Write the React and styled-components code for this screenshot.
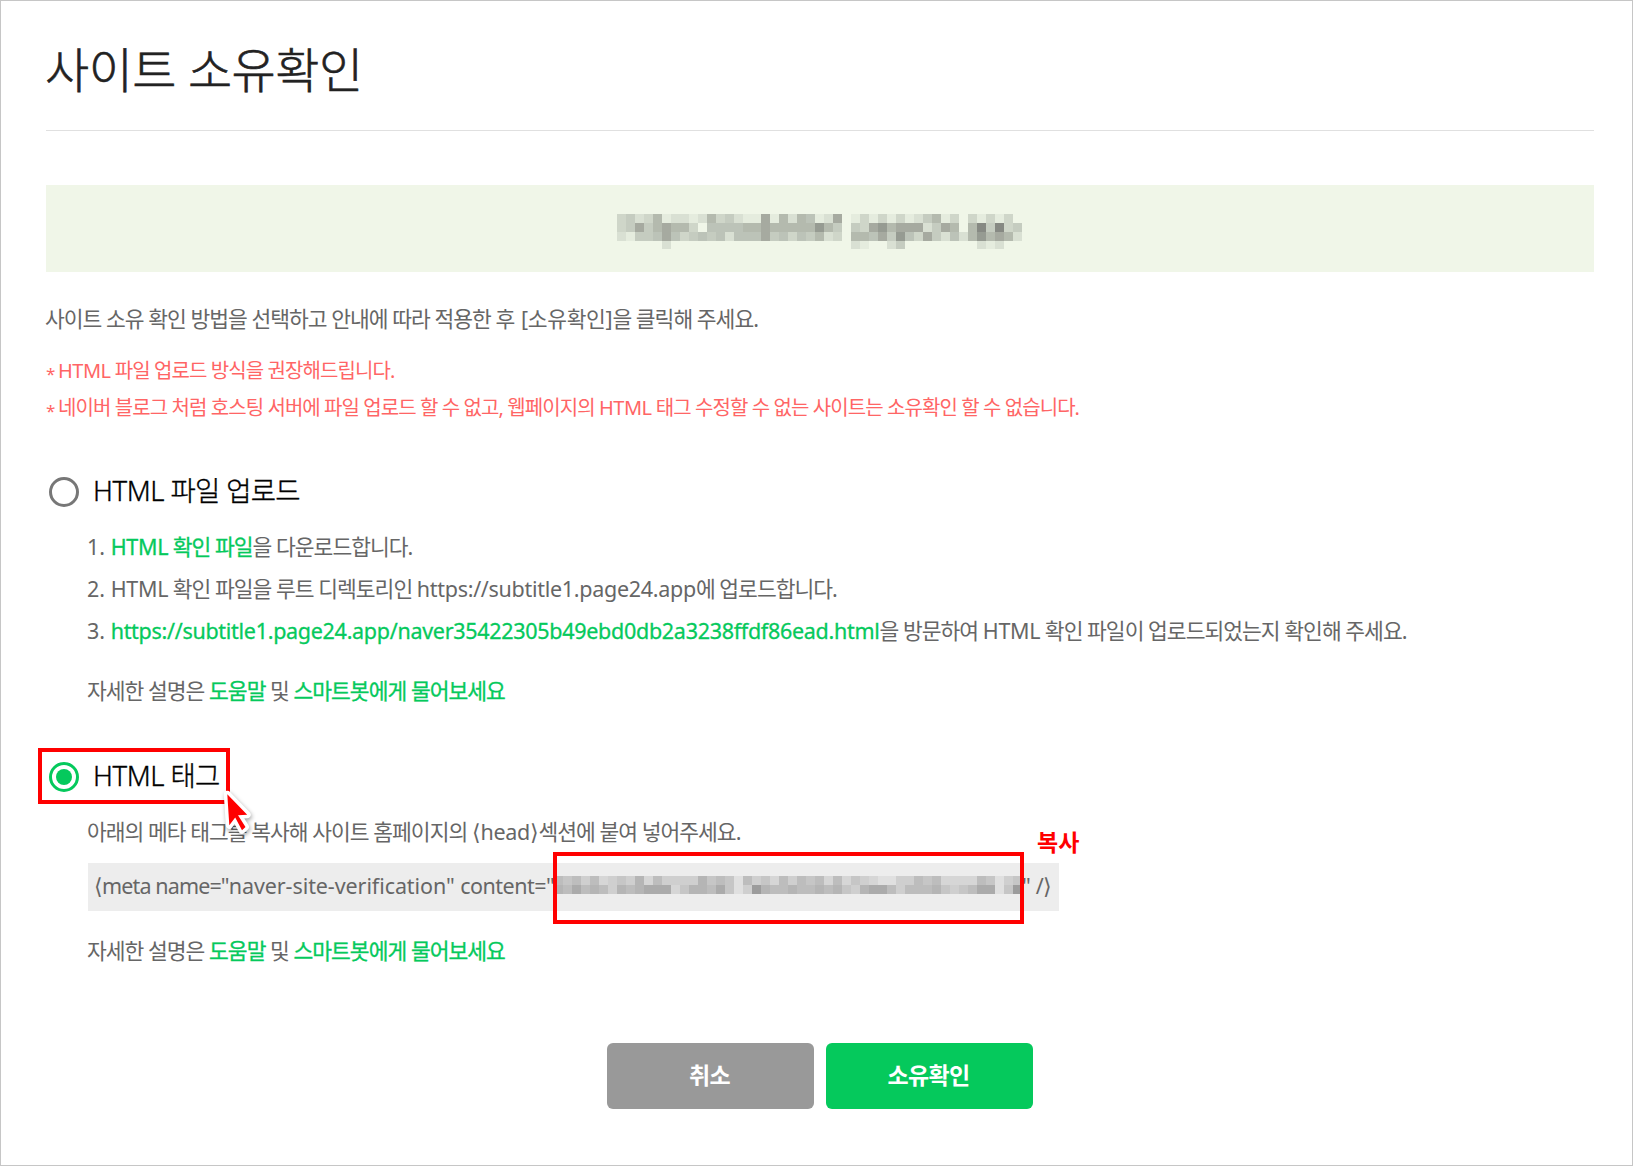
import React, { useState } from 'react'
import styled, { createGlobalStyle } from 'styled-components';


// one digit per 9px cell, 0 is empty
const urlMosaic = {
  colors: ["none", "#e5ecde", "#d9e0d3", "#cfd6c9", "#c5ccc0", "#bcc3b8", "#b4baae", "#a6aaa0", "#969b92", "#868983"],
  rows: [
    "342361221263421171626512701313131246130313130",
    "347467663055556676666686404378677724760694934",
    "214457534545255574535462306657485374252686762",
    "000002000000000000000000002100240000000021200",
  ],
};

const codeMosaic = {
  colors: ["none", "#e0e0e0", "#d6d6d6", "#cfcfcf", "#c6c6c6", "#bdbdbd", "#b5b5b5", "#ababab", "#9c9c9c"],
  rows: [
    "5453523436253333645415342535452524321133545222254134",
    "6575653656777246657413865565565643677535556434577148",
  ],
};

// offset cuts the left side of the first column
const Mosaic = ({ data, width, height, offset = 0 }) => (
  <MosaicSvg width={width} height={height} shapeRendering="crispEdges">
    {data.rows.map((row, y) =>
      row.split("").map((n, x) => (
        <rect key={x + "-" + y} x={x * 9 - offset} y={y * 9} width="9" height="9" fill={data.colors[n]} />
      ))
    )}
  </MosaicSvg>
);

const Help = () => (
  <HelpText>
    자세한 설명은 <Link href="#">도움말</Link> 및 <Link href="#">스마트봇에게 물어보세요</Link>
  </HelpText>
);

const App = () => {
  const [method, setMethod] = useState("tag");

  return (
    <Page>
      <GlobalStyle />
      <Header>
        <Title>사이트 소유확인</Title>
      </Header>
      <Banner>
        <Mosaic data={urlMosaic} width={405} height={35} />
      </Banner>
      <Guide>
        사이트 소유 확인 방법을 선택하고 안내에 따라 적용한 후 <Bracket>[소유확인]</Bracket>을 클릭해 주세요.
      </Guide>
      <Notice>
        <li><Star>* </Star><Latin $ls="-0.5px">HTML</Latin> 파일 업로드 방식을 권장해드립니다.</li>
        <li>
          <Star>* </Star>네이버 블로그 처럼 호스팅 서버에 파일 업로드 할 수 없고, 웹페이지의 <Latin $ls="-0.5px">HTML</Latin> 태그 수정할 수 없는 사이트는 소유확인 할 수 없습니다.
        </li>
      </Notice>

      <Method $top="46px" onClick={() => setMethod("file")}>
        <Radio $checked={method === "file"} />
        <MethodName><Latin $ls="-0.4px">HTML</Latin> 파일 업로드</MethodName>
      </Method>
      <Section $top="14px">
        <Step><Latin $ls="0">1. </Latin><Link href="#"><Latin>HTML</Latin> 확인 파일</Link>을 다운로드합니다.</Step>
        <Step>
          <Latin $ls="0">2. </Latin><Latin>HTML</Latin> 확인 파일을 루트 디렉토리인 <Latin>https://subtitle1.page24.app</Latin>에 업로드합니다.
        </Step>
        <Step>
          <Latin $ls="0">3. </Latin><Link href="#"><Latin>https://subtitle1.page24.app/naver35422305b49ebd0db2a3238ffdf86ead.html</Latin></Link>을 방문하여 <Latin>HTML</Latin> 확인 파일이 업로드되었는지 확인해 주세요.
        </Step>
        <Help />
      </Section>

      <Method $top="51px" onClick={() => setMethod("tag")}>
        <Radio $checked={method === "tag"} />
        <MethodName><Latin $ls="-0.4px">HTML</Latin> 태그</MethodName>
        <MethodMark />
        <Cursor viewBox="0 0 44 56">
          <path d="M9.3 9.3 29.2 29.7 20 30.2 27.5 42 24 45.3 17.2 32.5 11.3 40.3Z" />
        </Cursor>
      </Method>
      <Section $top="20px">
        <Desc>아래의 메타 태그를 복사해 사이트 홈페이지의 <Latin $ls="-0.36px">⟨head⟩</Latin>섹션에 붙여 넣어주세요.</Desc>
        <Code>
          <CodeText>
            <Latin $ls="-0.88px">⟨meta name="</Latin>
            <Latin $ls="-0.08px">naver-site-verification" </Latin>
            <Latin $ls="-0.5px">content="</Latin>
          </CodeText>
          <Mosaic data={codeMosaic} width={463} height={18} offset={3} />
          <CodeText>" /⟩</CodeText>
          <CodeMark />
          <CopyLabel>복사</CopyLabel>
        </Code>
        <Help />
      </Section>

      <Buttons>
        <Button $bg="#999">취소</Button>
        <Button $bg="#05c95c">소유확인</Button>
      </Buttons>
    </Page>
  )
}

export default App;

const GlobalStyle = createGlobalStyle`
  * {
    box-sizing: border-box;
  }
  body {
    margin: 0;
    background: #fff;
  }
`;

const Page = styled.div`
  width: 1633px;
  height: 1166px;
  padding: 0 38px 0 45px;
  border: 1px solid #c6c6c6;
  overflow: hidden;
  background: #fff;
  color: #666;
  font-family: "Noto Sans", "Noto Sans CJK KR", sans-serif;
  font-size: 21.5px;
  letter-spacing: -0.98px;
  line-height: 30px;
  white-space: nowrap;
`;

const Header = styled.div`
  height: 130px;
  padding-top: 39px;
  border-bottom: 1px solid #e0e0e0;
`;

const Title = styled.h1`
  margin: 0 0 0 -1px;
  font-size: 48px;
  font-weight: 300;
  line-height: 60px;
  letter-spacing: -0.5px;
  color: #222;
  -webkit-text-stroke: 0.6px #222;
`;

const Banner = styled.div`
  display: flex;
  justify-content: center;
  height: 87px;
  margin-top: 54px;
  padding: 29px 1px 0 0;
  background: #f0f6e8;
`;

const MosaicSvg = styled.svg`
  display: block;
  flex: none;
`;

const Guide = styled.p`
  margin: 32px 0 0 -1px;
`;

const Bracket = styled.span`
  margin-left: 2px;
  letter-spacing: -0.3px;
`;

const Notice = styled.ul`
  margin: 18px 0 0;
  padding: 0;
  list-style: none;
  font-size: 20px;
  line-height: 37px;
  letter-spacing: -0.92px;
  color: #ff6565;
`;

const Star = styled.span`
  font-size: 17px;
  line-height: 0;
  letter-spacing: -0.9px;
  vertical-align: -2px;
`;

const Latin = styled.span`
  letter-spacing: ${(p) => p.$ls || "-0.29px"};
`;

const Method = styled.label`
  position: relative;
  display: flex;
  align-items: center;
  gap: 14px;
  height: 40px;
  margin-top: ${(p) => p.$top};
  padding-left: 3px;
`;

const Radio = styled.span`
  display: flex;
  flex: none;
  width: 30px;
  height: 30px;
  border: 3px solid ${(p) => (p.$checked ? "#05c95c" : "#777")};
  border-radius: 50%;

  &::after {
    content: "";
    width: 16px;
    height: 16px;
    margin: auto;
    border-radius: 50%;
    background: ${(p) => (p.$checked ? "#05c95c" : "transparent")};
  }
`;

const MethodName = styled.span`
  padding-bottom: 2px;
  font-size: 27.5px;
  font-weight: 300;
  letter-spacing: -0.7px;
  color: #000;
  -webkit-text-stroke: 0.35px #000;
`;

const MethodMark = styled.span`
  position: absolute;
  left: -8px;
  top: -9px;
  width: 192px;
  height: 56px;
  border: 4px solid #ff0000;
`;

const Cursor = styled.svg`
  position: absolute;
  left: 172px;
  top: 28px;
  z-index: 1;
  width: 44px;
  height: 56px;
  filter: drop-shadow(1px 2px 2px rgba(0, 0, 0, 0.35));

  path {
    fill: #ff0000;
    stroke: #fff;
    stroke-width: 7;
    stroke-linejoin: round;
    paint-order: stroke;
  }
`;

const Section = styled.div`
  margin: ${(p) => p.$top} 0 0 41px;
`;

const Step = styled.div`
  line-height: 42px;
`;

const HelpText = styled.p`
  margin: 24px 0 0;
`;

const Link = styled.a`
  color: #05c95c;
  text-decoration: none;
  -webkit-text-stroke: 0.3px #05c95c;
`;

const Desc = styled.p`
  margin: 0;
`;

const Code = styled.div`
  position: relative;
  display: flex;
  align-items: flex-start;
  width: 971px;
  height: 48px;
  margin: 16px 0 25px 1px;
  padding-left: 6px;
  background: #ededed;

  ${MosaicSvg} {
    margin: 13px 2px 0 0;
  }
`;

const CodeText = styled.span`
  line-height: 46px;
  letter-spacing: -0.36px;
  white-space: pre;

  &:first-child {
    width: 463px;
  }
`;

const CodeMark = styled.span`
  position: absolute;
  left: 465px;
  top: -11px;
  width: 471px;
  height: 72px;
  border: 4px solid #ff0000;
`;

const CopyLabel = styled.span`
  position: absolute;
  left: 949px;
  top: -36px;
  font-size: 23px;
  font-weight: 700;
  letter-spacing: 0;
  color: #ff0000;
`;

const Buttons = styled.div`
  display: flex;
  justify-content: center;
  gap: 12px;
  margin-top: 77px;
`;

const Button = styled.button`
  width: 207px;
  height: 66px;
  padding: 0 2px 4px 0;
  border: 0;
  border-radius: 6px;
  background: ${(p) => p.$bg};
  color: #fff;
  font-family: inherit;
  font-size: 23px;
  font-weight: 700;
  letter-spacing: -0.6px;
`;
